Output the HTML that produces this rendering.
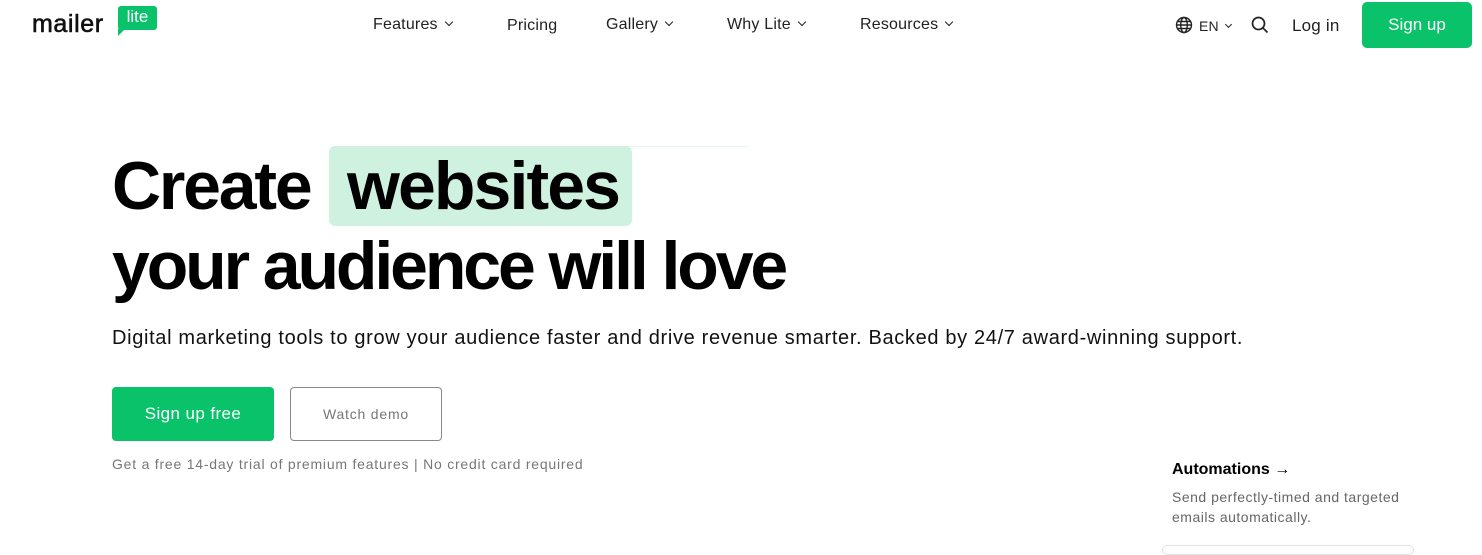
<!DOCTYPE html>
<html><head><meta charset="utf-8"><style>
*{margin:0;padding:0;box-sizing:border-box}
body{width:1482px;height:548px;overflow:hidden;background:#fff;font-family:"Liberation Sans",sans-serif;color:#111;position:relative}
.a{position:absolute;white-space:nowrap}
.nav{font-size:16px;color:#222;top:16px;letter-spacing:0.2px}
.chev{display:inline-block;width:6px;height:6px;border-right:1.6px solid #222;border-bottom:1.6px solid #222;transform:rotate(45deg);margin-left:8px;position:relative;top:-4px}
h1{position:absolute;left:112px;font-size:68px;font-weight:700;letter-spacing:-3.1px;color:#000;line-height:80px;white-space:nowrap}
</style></head><body>
<div class="a" style="left:32px;top:10px;font-size:25px;color:#111;letter-spacing:0.6px;-webkit-text-stroke:0.6px #111">mailer</div>
<div class="a" style="left:118px;top:6px;width:39px;height:24px;background:#09c269;border-radius:3px;color:#fff;font-size:17px;text-align:center;line-height:22px">lite</div>
<div class="a" style="left:118px;top:29px;width:0;height:0;border-left:7px solid #09c269;border-bottom:7px solid transparent"></div>
<div class="a nav" style="left:373px">Features<span class="chev"></span></div>
<div class="a nav" style="left:507px;top:17px">Pricing</div>
<div class="a nav" style="left:606px">Gallery<span class="chev"></span></div>
<div class="a nav" style="left:727px">Why Lite<span class="chev"></span></div>
<div class="a nav" style="left:860px">Resources<span class="chev"></span></div>
<svg class="a" style="left:1175px;top:16px" width="18" height="18" viewBox="0 0 18 18" fill="none" stroke="#222" stroke-width="1.4"><circle cx="9" cy="9" r="7.5"/><ellipse cx="9" cy="9" rx="3.3" ry="7.5"/><path d="M1.5 9h15M2.5 5.5h13M2.5 12.5h13"/></svg>
<div class="a nav" style="left:1199px;top:18px;font-size:14px">EN<span class="chev" style="width:5px;height:5px;margin-left:7px"></span></div>
<svg class="a" style="left:1251px;top:16px" width="18" height="18" viewBox="0 0 18 18" fill="none" stroke="#222" stroke-width="1.7"><circle cx="7.5" cy="7.5" r="6"/><path d="M12 12l4.5 4.5"/></svg>
<div class="a nav" style="left:1292px;top:16px;font-size:17px">Log in</div>
<div class="a" style="left:1362px;top:2px;width:110px;height:46px;background:#09c269;border-radius:5px;color:#fff;font-size:17px;text-align:center;line-height:46px">Sign up</div>
<div class="a" style="left:600px;top:146px;width:148px;height:1px;background:#e6f7ee"></div>
<div class="a" style="left:329px;top:146px;width:303px;height:80px;background:#cff2e0;border-radius:6px"></div>
<h1 style="top:146px;letter-spacing:-2.2px">Create</h1>
<h1 style="top:146px;left:347px;letter-spacing:-1.9px">websites</h1>
<h1 style="top:226px">your audience will love</h1>
<div class="a" style="left:112px;top:327px;font-size:20px;color:#111;letter-spacing:0.66px">Digital marketing tools to grow your audience faster and drive revenue smarter. Backed by 24/7 award-winning support.</div>
<div class="a" style="left:112px;top:387px;width:162px;height:54px;background:#09c269;border-radius:4px;color:#fff;font-size:17px;text-align:center;line-height:54px;letter-spacing:0.4px">Sign up free</div>
<div class="a" style="left:290px;top:387px;width:152px;height:54px;border:1px solid #888;border-radius:4px;color:#777;font-size:14px;text-align:center;line-height:52px;letter-spacing:0.8px">Watch demo</div>
<div class="a" style="left:112px;top:456px;font-size:14px;color:#777;letter-spacing:0.78px">Get a free 14-day trial of premium features | No credit card required</div>
<div class="a" style="left:1172px;top:461px;font-size:16px;font-weight:700;color:#000">Automations →</div>
<div class="a" style="left:1172px;top:487px;font-size:14px;color:#666;line-height:20px;letter-spacing:0.5px">Send perfectly-timed and targeted<br>emails automatically.</div>
<div class="a" style="left:1162px;top:545px;width:252px;height:10px;border:1px solid #e2e2e2;border-radius:6px"></div>
</body></html>
